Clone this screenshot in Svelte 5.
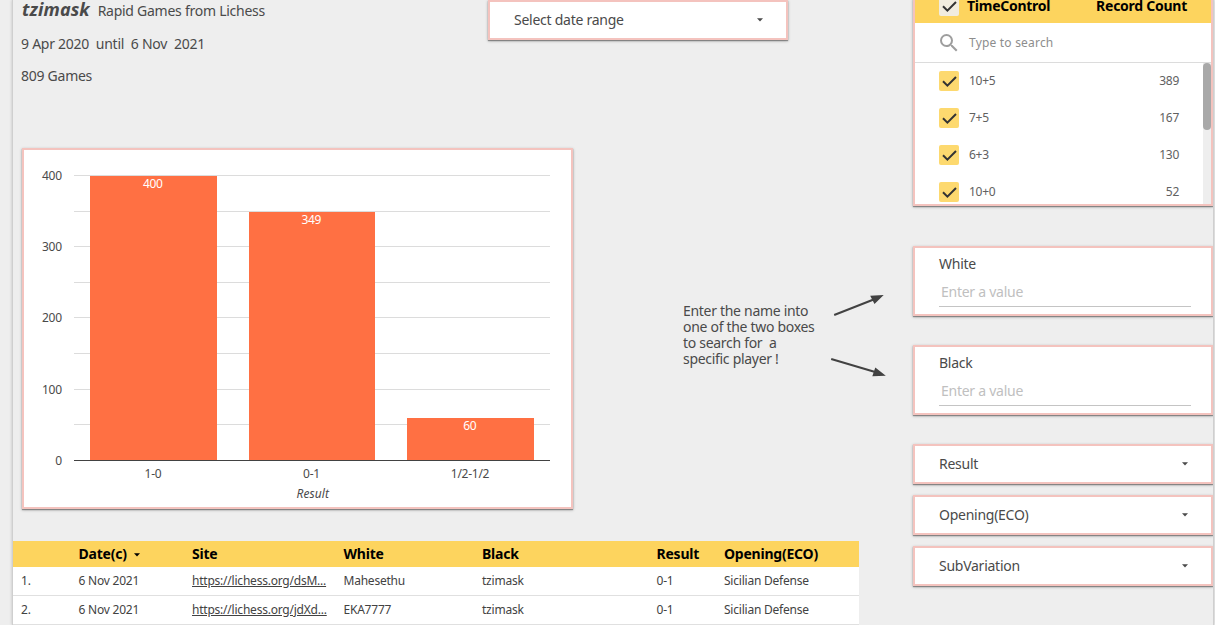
<script>
  const ticks = [
    { y: 27, label: '400' }, { y: 63 }, { y: 98, label: '300' }, { y: 134 }, { y: 169, label: '200' },
    { y: 205 }, { y: 241, label: '100' }, { y: 276 }, { y: 312, label: '0' }
  ];
  const bars = [
    { x: 68, w: 127, y: 28, value: 400, label: '1-0' },
    { x: 227, w: 126, y: 64, value: 349, label: '0-1' },
    { x: 385, w: 127, y: 270, value: 60, label: '1/2-1/2' }
  ];
  const controls = [['10+5', 389], ['7+5', 167], ['6+3', 130], ['10+0', 52]];
  const players = ['White', 'Black'];
  const menus = ['Result', 'Opening(ECO)', 'SubVariation'];
  const games = [
    ['1.', '6 Nov 2021', 'https://lichess.org/dsM...', 'Mahesethu', 'tzimask', '0-1', 'Sicilian Defense'],
    ['2.', '6 Nov 2021', 'https://lichess.org/jdXd...', 'EKA7777', 'tzimask', '0-1', 'Sicilian Defense']
  ];
</script>

{#snippet check()}
  <svg width="20" height="20" viewBox="0 0 20 20"><path d="M4 10.3 8.4 14.6 17 6" fill="none" stroke="#333" stroke-width="2" /></svg>
{/snippet}

{#snippet caret()}
  <svg class="caret" width="6" height="4" viewBox="0 0 6 4"><path d="M0 .3H6L3 3.6Z" fill="currentColor" /></svg>
{/snippet}

<div class="page">
  <main>
    <header>
      <div class="intro">
        <p class="title"><em>tzimask</em>Rapid Games from Lichess</p>
        <p>9 Apr 2020&nbsp; until&nbsp; 6 Nov&nbsp; 2021</p>
        <p>809 Games</p>
      </div>
      <div class="card menu date"><span>Select date range</span>{@render caret()}</div>
    </header>

    <section class="middle">
      <div class="card chart">
        <svg width="551" height="361" viewBox="0 0 551 361">
          {#each ticks as t}
            <rect x="52" y={t.y} width="476" height="1" fill="#dcdcdc" />
            {#if t.label}<text x="39.8" y={t.y + 5} text-anchor="end">{t.label}</text>{/if}
          {/each}
          {#each bars as b}
            <rect x={b.x} y={b.y} width={b.w} height={312 - b.y} fill="#ff7043" />
            <text class="value" x={b.x + b.w / 2 - 0.7} y={b.y + 12} text-anchor="middle">{b.value}</text>
            <text x={b.x + b.w / 2 - 0.5} y="330" text-anchor="middle">{b.label}</text>
          {/each}
          <rect x="52" y="312" width="476" height="1" fill="#424242" />
          <text class="axis" x="290.8" y="350" text-anchor="middle">Result</text>
        </svg>
      </div>
      <p class="note">Enter the name into<br />one of the two boxes<br />to search for&nbsp; a<br />specific player !</p>
      <svg class="arrows" width="60" height="94" viewBox="0 0 60 94" fill="#424242">
        <path d="M4.2 31 43 15.8M1.2 75 46 88.2" fill="none" stroke="#424242" stroke-width="2" />
        <path d="M40.2 11.8 53.7 11 44.5 20ZM45.3 83.5 55.8 91.7 42.3 92.3Z" />
      </svg>
    </section>

    <div class="table">
      <div class="row head">
        <span></span><span>Date(c) {@render caret()}</span><span>Site</span><span>White</span><span>Black</span><span>Result</span><span>Opening(ECO)</span>
      </div>
      {#each games as game}
        <div class="row">
          {#each game as cell, i}<span class:link={i === 2}>{cell}</span>{/each}
        </div>
      {/each}
    </div>
  </main>

  <aside>
    <div class="card filter">
      <div class="filter-head"><i class="box pale">{@render check()}</i><b>TimeControl</b><b class="count">Record Count</b></div>
      <div class="search">
        <svg width="24" height="24" viewBox="0 0 24 24"><path fill="#9e9e9e" d="M15.5 14h-.79l-.28-.27A6.47 6.47 0 0 0 16 9.5 6.5 6.5 0 1 0 9.5 16c1.61 0 3.09-.59 4.23-1.57l.27.28v.79l5 4.99L20.49 19l-4.99-5zm-6 0C7.01 14 5 11.99 5 9.5S7.01 5 9.5 5 14 7.01 14 9.5 11.99 14 9.5 14z" /></svg>
        <span>Type to search</span>
      </div>
      <div class="options">
        <div class="list">
          {#each controls as [name, count]}
            <div class="option"><i class="box">{@render check()}</i><span>{name}</span><span class="count">{count}</span></div>
          {/each}
        </div>
        <div class="track"><div class="thumb"></div></div>
      </div>
    </div>
    {#each players as player}
      <div class="card field"><div>{player}</div><div class="input">Enter a value</div></div>
    {/each}
    <div class="menus">
      {#each menus as menu}
        <div class="card menu"><span>{menu}</span>{@render caret()}</div>
      {/each}
    </div>
  </aside>
</div>

<style>
  :global(body) { background: #eee; overflow: hidden; }
  * { box-sizing: border-box; }
  p { margin: 0; }
  svg { display: block; flex: none; }
  .page {
    display: flex; width: 1202px; height: 625px; margin-left: 12px; overflow: hidden;
    border: solid #cfcfcf; border-width: 0 1px; box-shadow: 0 0 3px #0003;
    font: 14px/16px "Noto Sans", "Open Sans", sans-serif; letter-spacing: -0.26px; color: #4a4a4a;
  }
  main { width: 847px; flex: none; }
  .card { background: #fff; border: 2px solid #f4c3be; box-shadow: 0 1px 3px #0004, 0 1px 1px #0005; }
  header { display: flex; height: 148px; padding-left: 8px; }
  .intro { width: 467px; }
  .intro p { height: 32.5px; line-height: 22px; white-space: nowrap; }
  .intro .title { line-height: 18px; }
  .intro em { font-weight: 700; font-size: 18px; letter-spacing: 0.1px; margin: 0 8px 0 1px; }
  .menu { display: flex; align-items: center; justify-content: space-between; width: 300px; height: 40px; padding: 0 23.5px 0 24px; }
  .middle { display: flex; padding-left: 9px; height: 393px; }
  .chart { flex: none; width: 551px; height: 361px; }
  .chart svg { margin: -2px; }
  text { font-size: 12px; fill: #4a4a4a; }
  .value { fill: #fff; }
  .axis { font-style: italic; letter-spacing: 0.1px; }
  .note { flex: none; width: 147px; margin: 155px 0 0 110px; white-space: nowrap; letter-spacing: -0.3px; }
  .arrows { margin-top: 136px; }
  .row {
    display: grid; grid-template-columns: 57.5px 113.5px 151.5px 138.5px 174.5px 67.5px 1fr; align-items: center;
    width: 846px; height: 29px; padding-left: 8px; background: #fff; border-bottom: 1px solid #e0e0e0; font-size: 12px; white-space: nowrap;
    letter-spacing: -0.22px; color: #424242;
  }
  .head { height: 26px; border: 0; background: #fdd45e; color: #000; font-size: 14px; font-weight: 700; }
  .head .caret { display: inline-block; margin: 0 0 2px 4px; }
  .link { text-decoration: underline; }
  aside { width: 300px; margin-left: 53px; flex: none; }
  .filter { height: 208px; margin: -2px 0 40px; overflow: hidden; }
  .filter-head { display: flex; align-items: center; height: 23px; padding: 0 24px 11px 24px; background: #fdd45e; color: #000; }
  .filter-head b { margin-left: 8px; }
  .filter-head .count { margin-left: auto; }
  .box { flex: none; width: 20px; height: 20px; border-radius: 2px; background: #fdd96f; }
  .pale { background: #f1ecdf; }
  .search { display: flex; align-items: center; height: 40px; padding-left: 22px; border-bottom: 1px solid #dcdcdc; font-size: 12px; color: #8d8d8d; letter-spacing: 0.2px; }
  .search span { margin-left: 8px; }
  .options { display: flex; }
  .list { flex: 1; }
  .option { display: flex; align-items: center; height: 37px; padding: 0 24px 2px; font-size: 12px; color: #616161; }
  .option span { margin-left: 10px; }
  .option .count { margin-left: auto; }
  .track { width: 8px; height: 148px; background: #eee; }
  .thumb { height: 67px; border-radius: 4px; background: #a9a9a9; }
  .field { height: 70px; margin-bottom: 29px; padding: 8px 20px 0 24px; }
  .input { height: 35px; padding: 12px 2px 0; border-bottom: 1px solid #c4c4c4; color: #c0c0c0; }
  .menus { display: grid; gap: 11px; }
</style>
